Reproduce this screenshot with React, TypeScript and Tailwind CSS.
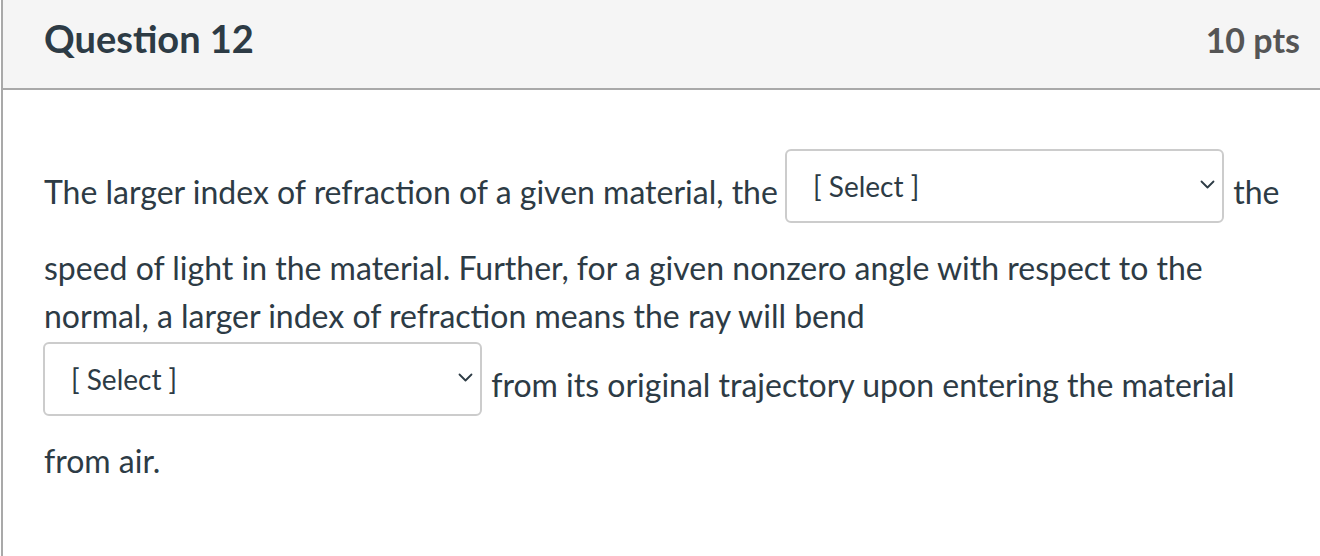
function Chevron() {
  return (
    <svg width="15" height="10" viewBox="0 0 15 10" fill="none" className="mt-[12px] shrink-0">
      <path d="M1.5 1.5 L7.5 7.5 L13.5 1.5" stroke="#2d3b45" strokeWidth="1.8" strokeLinecap="round" strokeLinejoin="round" />
    </svg>
  )
}

function SelectBox() {
  return (
    <>
      {" "}
      <span className="inline-flex align-[7px] w-[439px] h-[74px] mt-[2px] mb-[21px] ml-[-1px] mr-[1px] pt-[17px] pl-[26px] pr-[7px] border-2 border-[#cccccc] rounded-[6px] bg-white items-start justify-between">
        <span className="text-[28px] leading-[36px] text-[#2d3b45]">[ Select ]</span>
        <Chevron />
      </span>{" "}
    </>
  )
}

export default function App() {
  return (
    <div className="min-h-[556px] bg-white font-['Lato','Liberation_Sans',sans-serif]">
      <div className="ml-px min-h-[556px] border-l-2 border-[#a9a9a9]">
        <div className="h-[90px] bg-[#f5f5f5] border-b-2 border-[#a9a9a9] pl-[41px] pr-[20px] pt-[16px] flex items-baseline justify-between">
          <h2 className="text-[38px] leading-[44px] font-bold text-[#2d3b45]">Question 12</h2>
          <div className="text-[34px] leading-[44px] font-bold text-[#555555]">10 pts</div>
        </div>
        <div className="pl-[41px] pr-[20px] pt-[57px]">
          <p className="text-[32px] leading-[48px] text-[#2d3b45]">
            The larger index of refraction of a given material, the
            <SelectBox />
            the speed of light in the material. Further, for a given nonzero angle with respect to the
            normal, a larger index of refraction means the ray will bend
            <SelectBox />
            from its original trajectory upon entering the material from air.
          </p>
        </div>
      </div>
    </div>
  )
}
